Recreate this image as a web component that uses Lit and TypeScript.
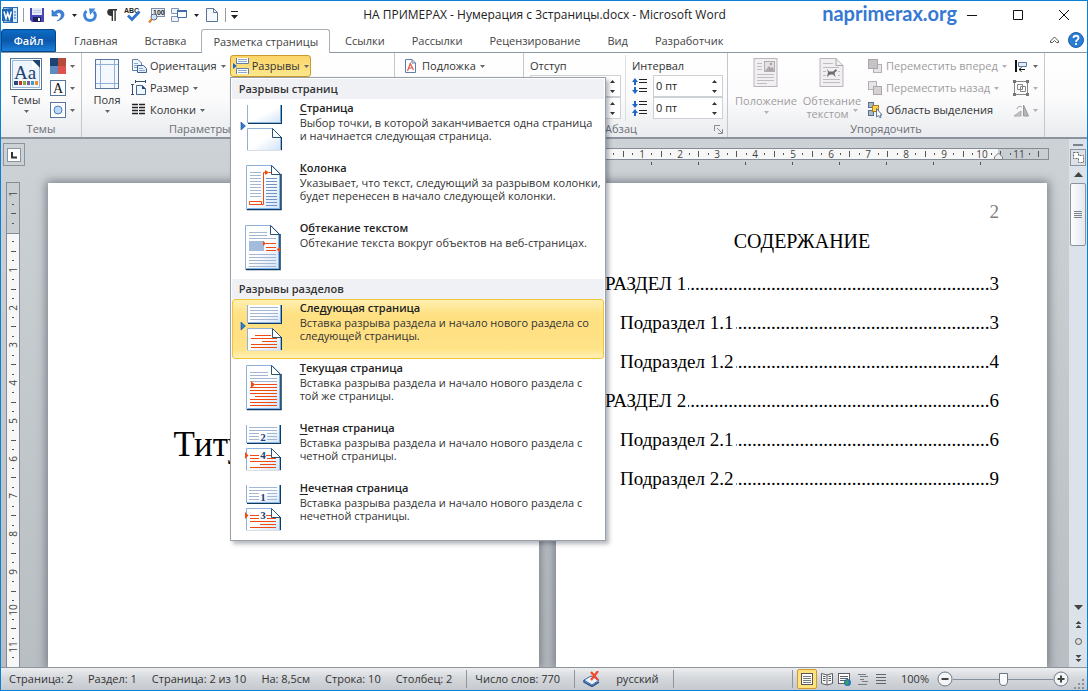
import { LitElement, html, css, svg } from "lit";
import { customElement } from "lit/decorators.js";
import { classMap } from "lit/directives/class-map.js";

const TABS = ["Главная", "Вставка", "Разметка страницы", "Ссылки", "Рассылки", "Рецензирование", "Вид", "Разработчик"];
const ACTIVE_TAB = "Разметка страницы";

const TOC = [
  { text: "РАЗДЕЛ 1", page: 3, sub: false },
  { text: "Подраздел 1.1", page: 3, sub: true },
  { text: "Подраздел 1.2", page: 4, sub: true },
  { text: "РАЗДЕЛ 2", page: 6, sub: false },
  { text: "Подраздел 2.1", page: 6, sub: true },
  { text: "Подраздел 2.2", page: 9, sub: true },
];

const CM = 37.75;

const lines = (ys: number[], x1: number, x2: number, color: string) =>
  ys.map((y) => svg`<path d="M${x1} ${y}.5H${x2}" stroke=${color} fill="none"/>`);

/* Sheets used by the break icons */
const topSheet = svg`
  <path d="M7 2V20H41V2" fill="url(#sheet)"/>
  <path d="M7.500 2V20" stroke="#8fb0d8"/><path d="M8 19.500H41" stroke="#8fb8e6"/><path d="M8 20.500H42" stroke="#123a5c"/>
  <path d="M40.500 2V19" stroke="#6aa8ea"/><path d="M41.500 2V21" stroke="#123a5c"/>`;
const bottomSheet = svg`
  <path d="M7.500 47V25.500H33L41.500 34V47" fill="url(#sheet)"/>
  <path d="M7.500 47V25.500H33" stroke="#8fb0d8" fill="none"/>
  <path d="M32.500 25.500V34.500H41.500Z" fill="#fff" stroke="#2a5578"/>
  <path d="M41.500 34V47" stroke="#123a5c"/><path d="M40.500 35V47" stroke="#8fb8e6"/><path d="M7 47.500H42" stroke="#dcdfe3"/>`;
const fullSheet = svg`
  <path d="M6.500 2.500H32L40.500 11V46.500H6.500Z" fill="url(#sheet)" stroke="#8fb0d8"/>
  <path d="M7 46.500H41V11" fill="none" stroke="#123a5c" stroke-width="1.500"/>
  <path d="M8 45.500H39.500V12" fill="none" stroke="#7fb4ee"/>
  <path d="M31.500 2.500V11.500H40.500Z" fill="#fff" stroke="#2a5578"/>`;
const blueArrow = svg`<path d="M1 19L5.500 23L1 27Z" fill="#2d7dd8" stroke="#174a8a" stroke-width=".6"/>`;

const bigIcon = (body: unknown) => html`<svg class="break-icon" width="44" height="50" viewBox="0 0 44 50" aria-hidden="true" fill="none">
  <defs><linearGradient id="sheet" x1="0" y1="0" x2="1" y2="1"><stop offset=".5" stop-color="#fff"/><stop offset="1" stop-color="#cfe2f8"/></linearGradient></defs>${body}</svg>`;

const GREY = "#a4b6d2";
const RED = "#f04a10";

const MENU = [
  {
    title: "Разрывы страниц",
    items: [
      { pre: "", key: "С", rest: "траница", text: "Выбор точки, в которой заканчивается одна страница и начинается следующая страница.", icon: svg`${topSheet}${bottomSheet}${blueArrow}` },
      {
        pre: "", key: "К", rest: "олонка", text: "Указывает, что текст, следующий за разрывом колонки, будет перенесен в начало следующей колонки.",
        icon: svg`${fullSheet}${lines([9, 12, 15, 18, 21, 24, 27, 30, 33], 10, 21, GREY)}${lines([15, 18, 21, 24, 27, 30, 33, 36, 39, 42], 26, 37, "#6f93c6")}
          <path d="M9.500 38.500H21.500V41.500H9.500ZM14 41.500H23.500V9.500H26" stroke=${RED}/><path d="M25 7L29 9.500L25 12Z" fill=${RED}/><path d="M29 9.500H31" stroke=${RED}/>`,
      },
      {
        pre: "О", key: "б", rest: "текание текстом", text: "Обтекание текста вокруг объектов на веб-страницах.",
        icon: svg`<g transform="translate(-1 0)">${fullSheet}${lines([9, 12], 10, 28, GREY)}${lines([15, 31, 34, 37, 40, 43], 10, 37, GREY)}<rect x="10" y="18" width="15" height="10" fill="#a3bbdd"/>
          ${lines([20, 24, 27], 27, 37, RED)}<path d="M24 18L27 20.500L24 23ZM41 24L37.500 26.500L41 29Z" fill=${RED}/></g>`,
      },
    ],
  },
  {
    title: "Разрывы разделов",
    items: [
      {
        pre: "Сле", key: "д", rest: "ующая страница", active: true, text: "Вставка разрыва раздела и начало нового раздела со следующей страницы.",
        icon: svg`${topSheet}${lines([4, 7, 10, 13, 16], 10, 38, GREY)}${bottomSheet}${lines([32], 15, 31, RED)}${lines([35, 44], 11, 37, RED)}${lines([38], 22, 37, RED)}${lines([41], 11, 37, RED)}${blueArrow}`,
      },
      {
        pre: "", key: "Т", rest: "екущая страница", text: "Вставка разрыва раздела и начало нового раздела с той же страницы.",
        icon: svg`${fullSheet}${lines([9, 12], 10, 28, GREY)}${lines([15, 18], 10, 37, GREY)}${lines([21], 15, 37, RED)}${lines([24, 27, 30], 10, 37, RED)}${lines([33], 15, 37, RED)}${lines([36, 39, 42], 10, 37, RED)}<path d="M11 18L15 21.500L11 25Z" fill=${RED}/>`,
      },
      { pre: "", key: "Ч", rest: "етная страница", text: "Вставка разрыва раздела и начало нового раздела с четной страницы.", icon: numbered("2", "4") },
      { pre: "", key: "Н", rest: "ечетная страница", text: "Вставка разрыва раздела и начало нового раздела с нечетной страницы.", icon: numbered("1", "3") },
    ],
  },
];

function numbered(a: string, b: string) {
  return svg`<g transform="translate(-1 0)">${topSheet}${lines([4, 7], 10, 38, GREY)}${lines([10, 13, 16], 10, 20, GREY)}${lines([10, 13, 16], 28, 38, GREY)}${bottomSheet}
    ${lines([32], 11, 20, RED)}${lines([32], 27, 32, RED)}${lines([35], 11, 20, RED)}${lines([35], 28, 37, RED)}${lines([38], 11, 37, RED)}${lines([41], 21, 37, RED)}${lines([44], 11, 37, RED)}
    <path d="M6 29L9.500 32.500L6 36Z" fill=${RED}/>
    <text x="24" y="18" class="icon-digit">${a}</text><text x="24" y="36" class="icon-digit">${b}</text></g>`;
}

const ico = (body: unknown, w = 16, h = 16) =>
  html`<svg width=${w} height=${h} viewBox="0 0 ${w} ${h}" fill="none" aria-hidden="true">${body}</svg>`;
const caret = html`<svg class="caret" width="5" height="3" viewBox="0 0 5 3" aria-hidden="true"><path d="M0 0H5L2.500 3Z" fill="currentColor"/></svg>`;

const I = {
  word: ico(svg`<rect x="1.500" y=".5" width="14" height="15" fill="#dcebf8" stroke="#2a6fb5"/><path d="M0 2L11 1V15L0 14Z" fill="#1c66b4"/><path d="M2 4.500L4 11.500L5.700 6L7.400 11.500L9.300 4.500" stroke="#fff" stroke-width="1.500"/><path d="M12 5H14M12 8H14M12 11H14" stroke="#2a6fb5"/>`),
  save: ico(svg`<path d="M1 1H15V15H3L1 13Z" fill="#4747b8"/><path d="M3 1H13V8H3Z" fill="#e8ecf8"/><path d="M4 10H12V15H4Z" fill="#20205c"/><rect x="9" y="11" width="2" height="3" fill="#fff"/><path d="M4 3.500H12M4 5.500H12" stroke="#bcc6e4"/>`),
  undo: ico(svg`<path d="M2 3V9H8L6 7C9 4.500 12 6 11 9.500C10.500 11.500 9 12.500 7 14C11 13 14 11 14 7.500C14 3 8 1.500 4.500 5Z" fill="#3d84da" stroke="#2a66b8" stroke-width=".6"/>`),
  redo: ico(svg`<path d="M4.500 4C1 7 2.500 13.500 8 13.500C13.500 13.500 15 7.500 11.500 4.500" stroke="#3d84da" stroke-width="2.800"/><path d="M7 1.500L13.500 1.500L8 8Z" fill="#3d84da"/>`),
  pilcrow: ico(svg`<path d="M7 2H14V3.500H12.800V14H11.400V3.500H10V14H8.600V9C3 9 3 2 7 2Z" fill="#333"/>`),
  spell: html`<svg width="18" height="18" viewBox="0 0 18 18" fill="none" aria-hidden="true"><text x="0" y="7" class="tiny">ABC</text><path d="M4 9.500L8 13.500L15.500 5.500" stroke="#2f74d0" stroke-width="2.800"/></svg>`,
  find: html`<svg width="18" height="18" viewBox="0 0 18 18" fill="none" aria-hidden="true"><rect x="4.500" y="2.500" width="13" height="8" fill="#e8f1fb" stroke="#7a8ca4"/><text x="6" y="9" class="tiny">100</text><circle cx="7" cy="11" r="3" fill="#cfe4fa" stroke="#5a6a80"/><path d="M5 13L2 16.500" stroke="#d8842a" stroke-width="2.200"/></svg>`,
  windows: html`<svg width="18" height="16" viewBox="0 0 18 16" fill="none" aria-hidden="true"><path d="M1.500 1.500H8.500V6.500H1.500ZM1.500 9.500H8.500V14.500H1.500Z" fill="#eef3fa" stroke="#7f95b5"/><path d="M7.500 3.500H16.500V10.500H7.500Z" fill="#fff" stroke="#3f6eaa"/><path d="M7 4H17" stroke="#3f6eaa" stroke-width="2"/></svg>`,
  doc: ico(svg`<path d="M2.500 1.500H9.500L13.500 5.500V14.500H2.500Z" fill="#f5f9fe" stroke="#5a7596"/><path d="M9.500 1.500V5.500H13.500" stroke="#5a7596"/>`),
  themes: ico(svg`<rect x=".5" y=".5" width="31" height="31" fill="#fff" stroke="#56779b"/><path d="M2.500 29.500V2.500H23L29.500 9V29.500Z" fill="#eef5fc" stroke="#9cb7d6"/><path d="M22 2L30 10V2Z" fill="#1d4370"/><path d="M22 2V9.500H29.500Z" fill="#fff"/><text x="4" y="21" class="aa">Aa</text>
    <rect x="4" y="23" width="4" height="4" fill="#27497a"/><rect x="9" y="23" width="3" height="4" fill="#c0392f"/><rect x="13" y="23" width="3" height="4" fill="#84a83c"/><rect x="17" y="23" width="3" height="4" fill="#7a55a2"/><rect x="21" y="23" width="3" height="4" fill="#3a9fc0"/><rect x="25" y="23" width="3" height="4" fill="#ee8a2c"/>`, 32, 32),
  colors: ico(svg`<path d="M0 0H8V8H0Z" fill="#1d4370"/><path d="M8 0H16V8H8Z" fill="#b84a3c"/><path d="M0 8H8V16H0Z" fill="#5d8cc4"/><path d="M8 8H16V16H8Z" fill="#e0504c"/>`),
  fonts: ico(svg`<rect x=".5" y=".5" width="15" height="15" fill="#fff" stroke="#56779b"/><text x="3" y="13" class="letter">A</text>`),
  effects: ico(svg`<rect x=".5" y=".5" width="15" height="15" fill="#fff" stroke="#56779b"/><circle cx="8" cy="8" r="4" fill="#bcd9f7" stroke="#4a7fc0"/>`),
  margins: ico(svg`<rect x="1.500" y=".5" width="23" height="29" fill="#f3f8fe" stroke="#56779b"/><path d="M6.500 1V29M20.500 1V29M2 5.500H24M2 24.500H24" stroke="#8eb0da"/>`, 26, 30),
  orient: ico(svg`<path d="M1.500 1.500H7L10.500 5V12.500H1.500Z" fill="#f0f6fd" stroke="#5f7fa6"/><path d="M3 5.500H7M3 7.500H7M3 9.500H6" stroke="#8ca8cc"/><path d="M6.500 7.500H12.500L15.500 10.500V14.500H6.500Z" fill="#e2eefb" stroke="#44648c"/><path d="M8 10.500H12M8 12.500H14" stroke="#8ca8cc"/>`),
  size: ico(svg`<path d="M4 1.500H15M4.500 0V3M14.500 0V3M1.500 4V15M0 4.500H3M0 14.500H3" stroke="#33506f"/><path d="M5.500 5.500H11L14.500 9V14.500H5.500Z" fill="#f0f6fd" stroke="#44648c"/><path d="M11 5V9H15Z" fill="#1d4370"/>`),
  columns: ico(svg`<path d="M1 2.500H7M1 5.500H7M1 8.500H7M1 11.500H7M8 2.500H14M8 5.500H14M8 8.500H14M8 11.500H14" stroke="#222" stroke-width="1.500"/>`),
  breaks: ico(svg`<path d="M3.500 0V5.500H15.500V0M3.500 16V10.500H15.500V16" fill="#fff" stroke="#5f7fa6"/><path d="M5 1.500H14M5 3.500H14M5 12.500H14M5 14.500H14" stroke="#8ca8cc"/><path d="M0 5L4 8L0 11Z" fill="#1f66c8"/>`),
  mark: ico(svg`<path d="M2.500 1.500H9L12.500 5V14.500H2.500Z" fill="#fff" stroke="#5f7fa6"/><path d="M9 1.500V5H12.500" stroke="#5f7fa6"/><path d="M4.500 13L7.300 5.500L10.500 12M5.500 10.500L9.500 9.500" stroke="#e2574a" stroke-width="1.200"/>`),
  before: ico(svg`<path d="M0 4L3 0L6 4H4V7H2V4Z" fill="#1f66c8"/><path d="M0 12L3 16L6 12H4V9H2V12Z" fill="#1f66c8"/><path d="M7 1.500H15M7 4.500H15M7 10.500H15M7 13.500H15" stroke="#222"/>`),
  after: ico(svg`<path d="M0 4L3 8L6 4H4V1H2V4Z" fill="#1f66c8"/><path d="M0 13L3 9L6 13H4V16H2V13Z" fill="#1f66c8"/><path d="M7 1.500H15M7 4.500H15M7 10.500H15M7 13.500H15" stroke="#222"/>`),
  position: ico(svg`<rect x="1" y=".5" width="23" height="28" fill="#f1eff1" stroke="#b9b5b9"/><path d="M4 5.500H9M4 8.500H9M4 11.500H9M4 16.500H21M4 19.500H21M4 22.500H21M4 25.500H14" stroke="#c0bcc0"/><rect x="11.500" y="3.500" width="10" height="10" fill="#e3e1e3" stroke="#b0acb0"/><path d="M12 13L16 8L18 10L20 9L21 13Z" fill="#a9a5a9"/><circle cx="18" cy="6" r="1.300" fill="#a9a5a9"/>`, 26, 30),
  wrap: ico(svg`<path d="M1 .5H17L24 7.500V28.500H1Z" fill="#f1eff1" stroke="#b9b5b9"/><path d="M17 .5V7.500H24" stroke="#aaa6aa"/><path d="M4 5.500H14M4 9.500H20M4 13.500H7M19 13.500H21M4 17.500H7M19 17.500H21M4 21.500H21M4 24.500H21" stroke="#c0bcc0"/><path d="M8 11L10 13.500H14L17 11L18 12.500L15.500 15L16.500 19L14 16.500H11L8 19L9 14.500Z" fill="#6f6b6f"/>`, 26, 30),
  forward: ico(svg`<rect x="6.500" y="6.500" width="8" height="8" fill="#e6e4e6" stroke="#b4b0b4"/><rect x="1.500" y="1.500" width="9" height="9" fill="#c6c2c6" stroke="#aaa6aa"/>`),
  backward: ico(svg`<rect x="1.500" y="1.500" width="8" height="8" fill="#e6e4e6" stroke="#b4b0b4"/><rect x="6.500" y="6.500" width="8" height="8" fill="#d4d0d4" stroke="#aaa6aa"/>`),
  select: ico(svg`<rect x="1.500" y=".5" width="5" height="5" fill="#a9b9cc" stroke="#5c6f86"/><rect x="1.500" y="8.500" width="5" height="5" fill="#a9b9cc" stroke="#5c6f86"/><rect x="5.500" y="3.500" width="6" height="6" fill="#ffd24a" stroke="#a87f2a"/><path d="M9.500 6.500V15L11.500 13.500L13 16L14 15.500L13 13H15Z" fill="#fff" stroke="#38597f" stroke-width=".8"/>`),
  align: ico(svg`<path d="M3 2V14" stroke="#111" stroke-width="2"/><path d="M5.500 4.500H13.500V8.500H5.500Z" fill="#e3eefa" stroke="#5c7ba2"/><path d="M6 11.500H12M6 11.500L8.500 9.500M6 11.500L8.500 13.500" stroke="#111"/>`),
  group: ico(svg`<path d="M1.500 1.500H14.500V14.500H1.500ZM4.500 4.500H9.500V9.500H4.500ZM7.500 6.500H12.500V11.500H7.500Z" stroke="#8a868a"/><path d="M0 0H3V3H0ZM13 0H16V3H13ZM0 13H3V16H0ZM13 13H16V16H13Z" fill="#777"/>`),
  rotate: ico(svg`<path d="M1 14H8L8 9Z" fill="#c9c5c9" stroke="#aaa6aa"/><path d="M10.500 14V3L15.500 14Z" fill="#b8b4b8" stroke="#9a969a"/><path d="M4 7C5 4 7 4 9 5" stroke="#9a969a"/>`),
  print: ico(svg`<rect x="2.500" y="2.500" width="11" height="11" fill="#fff" stroke="#555"/><path d="M4 5.500H12M4 7.500H12M4 9.500H12M4 11.500H12" stroke="#777"/>`),
  read: ico(svg`<path d="M8 4L2.500 2.500V12.500L8 14L13.500 12.500V2.500Z" fill="#f5f5f5" stroke="#5b5f66"/><path d="M8 4V14M4 5.500H6.500M4 7.500H6.500M4 9.500H6.500M9.500 5.500H12M9.500 7.500H12M9.500 9.500H12" stroke="#5b5f66"/>`),
  web: ico(svg`<rect x="1.500" y="2.500" width="11" height="10" fill="#fff" stroke="#5b5f66"/><path d="M3 5.500H11M3 7.500H11M3 9.500H8" stroke="#5b5f66"/><circle cx="10.500" cy="11.500" r="3.500" fill="#2577b5"/><path d="M8 11L10.500 9L12 12L10 14Z" fill="#3da650"/>`),
  outline: ico(svg`<path d="M3 3.500H11M5 5.500H13M5 8.500H9M7 10.500H13M3 13.500H12" stroke="#777b82"/>`),
  draft: ico(svg`<path d="M3 3.500H13M3 6.500H13M3 9.500H13M3 12.500H13" stroke="#60646b"/>`),
  proof: html`<svg width="18" height="16" viewBox="0 0 18 16" fill="none" aria-hidden="true"><path d="M1 9L8 5L16 9L9 14Z" fill="#eaf2fc" stroke="#3c6aa6"/><path d="M1 9V11L9 15.500L16 11" stroke="#2c5694" stroke-width="1.500"/><path d="M8 1L15 9M15 0L8 9" stroke="#ee4b2c" stroke-width="2.200"/></svg>`,
};

@customElement("app-root")
export class AppRoot extends LitElement {
  static styles = css`
    :host { display: block; height: 100vh; font-family: "Open Sans", "Noto Sans", sans-serif; font-size: 11px; line-height: 16px; color: #333; }
    * { box-sizing: border-box; }
    button { font: inherit; color: inherit; background: none; border: 0; padding: 0; margin: 0; display: flex; align-items: center; }
    svg { display: block; flex: none; }
    .window { height: 100%; display: flex; flex-direction: column; border: 1px solid #0a7fd6; background: #fff; overflow: hidden; }
    .spacer { flex: 1; }

    .titlebar { display: flex; align-items: center; height: 28px; flex: none; }
    .qat { display: flex; align-items: center; flex: 1; gap: 5px; padding-left: 1px; color: #222; }
    .qat .with-caret { gap: 5px; }
    .qat .caret { color: #222; }
    .divider { width: 1px; height: 14px; background: #9a9a9a; }
    .title { color: #222; white-space: nowrap; font-size: 12px; }
    .title-right { flex: 1; display: flex; align-items: center; justify-content: flex-end; }
    .brand { font: 700 20px/24px Lato, sans-serif; color: #3478d4; margin-right: -8px; padding-bottom: 4px; }
    .win-btn { width: 46px; height: 26px; justify-content: center; }

    .tabs { display: flex; align-items: flex-end; height: 24px; flex: none; border-bottom: 1px solid #8d97a3; }
    .file { width: 55px; height: 23px; justify-content: center; color: #fff; font-weight: 600; background: linear-gradient(#0d6cc4, #0a57ab 50%, #1c80d8); border: 1px solid #07468c; border-radius: 3px 3px 0 0; margin-right: 4px; }
    .tab { height: 23px; padding: 0 11px; margin: 0 1px 0 2px; border: 1px solid transparent; border-bottom: 0; color: #444; }
    .tab.on { height: 24px; margin-bottom: -1px; background: #fff; border-color: #a9b0b8; border-radius: 3px 3px 0 0; }
    .tab-tools { display: flex; align-items: center; gap: 9px; padding-right: 3px; height: 24px; }

    .ribbon { display: flex; height: 86px; flex: none; background: linear-gradient(#fff, #fbfbfc 55%, #e9ebee); border-bottom: 2px solid #8b939c; position: relative; z-index: 2; }
    .group { display: flex; flex-direction: column; border-right: 1px solid #c3c8ce; }
    .group-body { display: flex; height: 68px; padding-top: 2px; }
    .group-name { display: flex; align-items: center; height: 16px; color: #6a6e75; padding: 0 4px; }
    .group-name span { flex: 1; text-align: center; }
    .g-themes { width: 81px; } .g-themes .group-body { padding-left: 5px; gap: 4px; }
    .g-setup { width: 313px; } .g-setup .group-body { padding-left: 5px; gap: 4px; } .g-setup .group-name { padding: 0 12px 0 0; }
    .g-bg { width: 129px; } .g-bg .group-body { padding-left: 8px; }
    .g-par { width: 204px; }
    .g-arr { width: 317px; } .g-arr .group-body { padding: 2px 6px 0 5px; }
    .big { flex-direction: column; width: 40px; padding-top: 3px; line-height: 13px; }
    .big svg:first-child { margin-bottom: 3px; }
    .big .caret { margin-top: 4px; }
    .big .inline { display: flex; align-items: center; gap: 3px; }
    .big .inline .caret { margin-top: 0; }
    .big.medium svg:first-child { margin-top: 1px; margin-bottom: 4px; }
    .big.wide { width: 66px; }
    .big.wide svg:first-child { margin-bottom: 6px; }
    .stack { display: flex; flex-direction: column; }
    .g-arr .stack { margin-left: 2px; }
    .small { height: 22px; gap: 3px; white-space: nowrap; }
    .caret { color: #666; margin-left: 1px; }
    .off { color: #a09ca0; } .off .caret { color: #b4b0b4; }
    .anchor { position: relative; z-index: 5; }
    .breaks { width: 81px; height: 22px; gap: 3px; padding-left: 2px; border: 1px solid #c99a2c; border-radius: 3px; background: linear-gradient(#fbd46a, #fde88c); }

    .col { display: flex; flex-direction: column; padding: 0 4px 0 6px; flex: 1; }
    .col + .col { border-left: 1px solid #dcdfe3; }
    .col-title { height: 20px; line-height: 22px; }
    .field { display: flex; align-items: center; height: 22px; gap: 5px; }
    .spin { display: flex; flex: 1; height: 22px; min-width: 0; background: #fff; border: 1px solid #cdd1d6; }
    .spin input { width: 100%; min-width: 0; font: inherit; color: #222; border: 0; padding: 0 2px; background: none; outline: 0; }
    .spin div { display: flex; flex-direction: column; justify-content: space-around; width: 16px; flex: none; align-items: center; }

    .menu { position: absolute; left: 0; top: 22px; width: 376px; background: #fff; border: 1px solid #9aa0a8; box-shadow: 3px 3px 4px rgba(40, 50, 70, .35); padding: 1px; }
    .menu-title { height: 20px; padding: 0 7px; background: #f0f1f5; font-weight: 600; line-height: 20px; }
    .entry { width: 100%; height: 60px; padding: 0 1px 0 7px; gap: 16px; align-items: flex-start; text-align: left; border: 1px solid transparent; border-radius: 3px; }
    .entry.on { border-color: #f0c53c; background: linear-gradient(#ffefb0, #ffe183 25%, #ffe083 60%, #ffe488 85%, #fff0b8); }
    .entry b { display: block; line-height: 15px; font-weight: 600; color: #222; }
    .entry b u { text-underline-offset: 2px; }
    .entry .desc { display: block; line-height: 13px; padding-top: 1px; }
    .break-icon { margin-top: 3px; }
    .icon-digit { font: 700 11px "Liberation Serif", serif; fill: #1d3f77; text-anchor: middle; }
    .tiny { font: 700 7px "Liberation Sans", sans-serif; fill: #222; }
    .aa { font: 19px "Liberation Serif", serif; fill: #1d4370; }
    .letter { font: 14px "Liberation Serif", serif; fill: #111; }

    .work { flex: 1; min-height: 0; display: flex; background: linear-gradient(#cdd2d6, #b9bec3); }
    .desk { flex: 1; min-width: 0; display: flex; flex-direction: column; }
    .ruler-row { display: flex; justify-content: space-between; height: 29px; flex: none; padding: 4px 20px 0 2px; }
    .hruler { padding-top: 5px; }
    .tabstop { width: 22px; height: 23px; border: 1px solid #8c939b; justify-content: center; }
    .desk-body { flex: 1; min-height: 0; display: flex; }
    .vruler { width: 25px; padding: 14px 0 0 5px; flex: none; overflow: hidden; }
    .ruler-text { font-size: 10px; fill: #444; text-anchor: middle; }
    .pages { flex: 1; display: grid; grid-template-columns: repeat(2, minmax(0, 1fr)); gap: 17px; padding: 15px 22px 0 22px; overflow: hidden; }
    .page { background: #fff; box-shadow: 0 0 9px 2px rgba(70, 78, 88, .6); font-family: "Liberation Serif", serif; color: #000; }
    .heading { padding-top: 243px; text-align: center; font-size: 35px; line-height: 38px; }
    .toc-page { padding: 18px 48px 0 49px; font-size: 19px; line-height: 22px; }
    .page-no { text-align: right; color: #808080; }
    .toc-title { text-align: center; margin: 7px 0 12px; font-size: 20px; }
    .toc-row { display: flex; align-items: center; height: 39px; white-space: nowrap; }
    .toc-row.sub { padding-left: 15px; }
    .dots { flex: 1; min-width: 0; overflow: hidden; direction: rtl; margin-left: 2px; }

    .scroll { width: 18px; flex: none; display: flex; flex-direction: column; align-items: center; background: #dce2e9; padding-top: 5px; }
    .split { width: 10px; height: 2px; background: #7c838b; margin-bottom: 3px; }
    .ruler-toggle { width: 16px; height: 17px; border: 1px solid #8c939b; justify-content: center; }
    .arrow { width: 16px; height: 17px; justify-content: center; }
    .thumb { width: 16px; height: 63px; border: 1px solid #8a929c; border-radius: 2px; background: linear-gradient(90deg, #fdfdfe, #e3e7ee); justify-content: center; }

    .status { display: flex; align-items: center; height: 23px; flex: none; border-top: 1px solid #8d949c; background: linear-gradient(#eceef0, #d3d6da 50%, #c6cacf); padding-left: 8px; }
    .status .texts { display: flex; gap: 15px; white-space: nowrap; }
    .status .sep { width: 1px; height: 18px; background: #8f959d; margin: 0 8px 0 14px; }
    .views { display: flex; align-items: center; gap: 2px; margin: 0 12px 0 -4px; }
    .view.on { width: 20px; height: 20px; justify-content: center; border: 1px solid #cf9a2e; border-radius: 2px; background: #ffe27c; }
    .zoom { display: flex; align-items: center; margin-left: 8px; }
    .zoom input { appearance: none; width: 100px; height: 16px; margin: 0; background: linear-gradient(#8490a0, #8490a0) center / 100% 1px no-repeat; }
    .zoom input::-webkit-slider-thumb { appearance: none; width: 9px; height: 13px; background: #fafbfc; border: 1px solid #6e7884; border-radius: 1px 1px 5px 5px; }
    .grip { align-self: flex-end; margin-left: 5px; }
  `;

  private hRuler() {
    const zero = 49;
    const out = [];
    for (let q = -4; q < 47; q++) {
      const x = Math.round(zero + (q * CM) / 4);
      if (q === 0) continue;
      if (q % 4 === 0) out.push(svg`<text class="ruler-text" x=${x} y="9.500">${Math.abs(q / 4)}</text>`);
      else out.push(svg`<path d="M${x}.5 ${q % 2 ? 5 : 3}V${q % 2 ? 7 : 9}" stroke="#555"/>`);
    }
    const ticks = [0, 1, 2, 3, 4, 5, 6, 7, 8].map((i) => svg`<path d="M${49 + i * 47}.5 14V17" stroke="#555"/>`);
    return html`<svg width="494" height="18" viewBox="0 0 494 18" fill="none" aria-hidden="true">
      <rect x=".5" y=".5" width="493" height="11" fill="#c9ced3" stroke="#858c94"/>
      <rect x="49" y="1" width="394" height="10" fill="#f7f7f7"/>${out}${ticks}
      <path d="M439.500 11.500V9L443.500 5L447.500 9V11.500Z" fill="#eee" stroke="#7a8088"/>
    </svg>`;
  }

  private vRuler() {
    const zero = 50;
    const out = [];
    for (let q = -4; q < 46; q++) {
      const y = Math.round(zero + (q * CM) / 4);
      if (q === 0) continue;
      if (q % 4 === 0) out.push(svg`<text class="ruler-text" transform="translate(11 ${y}) rotate(-90)">${Math.abs(q / 4)}</text>`);
      else out.push(svg`<path d="M${q % 2 ? 6 : 5} ${y}.5H${q % 2 ? 8 : 10}" stroke="#555"/>`);
    }
    return html`<svg width="14" height="700" viewBox="0 0 14 700" fill="none" aria-hidden="true">
      <rect x=".5" y=".5" width="13" height="699" fill="#f7f7f7" stroke="#858c94"/>
      <rect x=".5" y=".5" width="13" height="51" fill="#c9ced3" stroke="#858c94"/>${out}</svg>`;
  }

  private spin(label: string, icon: unknown) {
    return html`<div class="field">${icon}<span class="spin"><input type="text" .value=${"0 пт"} aria-label=${label} />
      <div><button aria-label="Больше">${ico(svg`<path d="M0 3L2.500 0L5 3Z" fill="#333"/>`, 5, 3)}</button>
      <button aria-label="Меньше">${ico(svg`<path d="M0 0L2.500 3L5 0Z" fill="#333"/>`, 5, 3)}</button></div></span></div>`;
  }

  private menu() {
    return html`<div class="menu" role="menu">
      ${MENU.map((s) => html`<div class="menu-title">${s.title}</div>
        ${s.items.map((i: any) => html`<button class=${classMap({ entry: true, on: !!i.active })} role="menuitem">
          ${bigIcon(i.icon)}<span><b>${i.pre}<u>${i.key}</u>${i.rest}</b><span class="desc">${i.text}</span></span></button>`)}`)}
    </div>`;
  }

  private launcher = ico(svg`<path d="M.5 6V.5H6M3 3L8 8M8.500 4V8.500H4" stroke="#888c92"/>`, 9, 9);

  private arrowIcon(d: string, h = 5) {
    return ico(svg`<path d=${d} fill="#444"/>`, 9, h);
  }

  render() {
    return html`<div class="window">
      <header class="titlebar">
        <div class="qat">
          ${I.word}<i class="divider"></i>
          <button aria-label="Сохранить">${I.save}</button>
          <button class="with-caret" aria-label="Отменить">${I.undo}${caret}</button>
          <button aria-label="Повторить">${I.redo}</button>
          <button aria-label="Знаки абзаца">${I.pilcrow}</button>
          <button aria-label="Правописание">${I.spell}</button>
          <button aria-label="Масштаб">${I.find}</button>
          <button class="with-caret" aria-label="Окна">${I.windows}${caret}</button>
          <button aria-label="Создать">${I.doc}</button>
          <i class="divider"></i>
          <button aria-label="Настройка панели">${ico(svg`<path d="M0 .5H7" stroke="#222"/><path d="M0 4H7L3.500 8Z" fill="#222"/>`, 7, 8)}</button>
        </div>
        <div class="title">НА ПРИМЕРАХ - Нумерация с 3страницы.docx - Microsoft Word</div>
        <div class="title-right">
          <span class="brand">naprimerax.org</span>
          <button class="win-btn" aria-label="Свернуть">${ico(svg`<path d="M0 5.500H10" stroke="#111"/>`, 10, 10)}</button>
          <button class="win-btn" aria-label="Развернуть">${ico(svg`<path d="M.5 .5H9.500V9.500H.5Z" stroke="#111"/>`, 10, 10)}</button>
          <button class="win-btn" aria-label="Закрыть">${ico(svg`<path d="M0 0L10 10M10 0L0 10" stroke="#111"/>`, 10, 10)}</button>
        </div>
      </header>

      <nav class="tabs">
        <button class="file">Файл</button>
        ${TABS.map((t) => html`<button class=${classMap({ tab: true, on: t === ACTIVE_TAB })}>${t}</button>`)}
        <span class="spacer"></span>
        <div class="tab-tools">
          <button aria-label="Свернуть ленту">${ico(svg`<path d="M.5 5L4.500 1L8.500 5V6.500H6.500L4.500 4.500L2.500 6.500H.5Z" fill="#fff" stroke="#555"/>`, 9, 8)}</button>
          <button aria-label="Справка">${ico(svg`<circle cx="8" cy="8" r="7.500" fill="#2b7cd3" stroke="#1d5fa8"/><path d="M5.500 6C5.500 3 10.500 3 10.500 6C10.500 8 8 7.800 8 10M8 11V13" stroke="#fff" stroke-width="1.800"/>`)}</button>
        </div>
      </nav>

      <section class="ribbon">
        <div class="group g-themes">
          <div class="group-body">
            <button class="big">${I.themes}Темы${caret}</button>
            <div class="stack">
              <button class="small" aria-label="Цвета">${I.colors}${caret}</button>
              <button class="small" aria-label="Шрифты">${I.fonts}${caret}</button>
              <button class="small" aria-label="Эффекты">${I.effects}${caret}</button>
            </div>
          </div>
          <div class="group-name"><span>Темы</span></div>
        </div>
        <div class="group g-setup">
          <div class="group-body">
            <button class="big medium">${I.margins}Поля${caret}</button>
            <div class="stack">
              <button class="small">${I.orient}Ориентация${caret}</button>
              <button class="small">${I.size}Размер${caret}</button>
              <button class="small">${I.columns}Колонки${caret}</button>
            </div>
            <div class="anchor">
              <button class="breaks" aria-haspopup="menu" aria-expanded="true">${I.breaks}Разрывы${caret}</button>
              ${this.menu()}
            </div>
          </div>
          <div class="group-name"><span>Параметры страницы</span>${this.launcher}</div>
        </div>
        <div class="group g-bg">
          <div class="group-body"><button class="small">${I.mark}Подложка${caret}</button></div>
          <div class="group-name"><span>Фон страницы</span></div>
        </div>
        <div class="group g-par">
          <div class="group-body">
            <div class="col"><div class="col-title">Отступ</div>${this.spin("Отступ слева", "")}${this.spin("Отступ справа", "")}</div>
            <div class="col"><div class="col-title">Интервал</div>${this.spin("Интервал до", I.before)}${this.spin("Интервал после", I.after)}</div>
          </div>
          <div class="group-name"><span>Абзац</span>${this.launcher}</div>
        </div>
        <div class="group g-arr">
          <div class="group-body">
            <button class="big wide off">${I.position}Положение${caret}</button>
            <button class="big wide off">${I.wrap}Обтекание<span class="inline">текстом${caret}</span></button>
            <div class="stack">
              <button class="small off">${I.forward}Переместить вперед${caret}</button>
              <button class="small off">${I.backward}Переместить назад${caret}</button>
              <button class="small">${I.select}Область выделения</button>
            </div>
            <span class="spacer"></span>
            <div class="stack">
              <button class="small" aria-label="Выровнять">${I.align}${caret}</button>
              <button class="small off" aria-label="Группировать">${I.group}${caret}</button>
              <button class="small off" aria-label="Повернуть">${I.rotate}${caret}</button>
            </div>
          </div>
          <div class="group-name"><span>Упорядочить</span></div>
        </div>
      </section>

      <main class="work">
        <div class="desk">
          <div class="ruler-row">
            <button class="tabstop" aria-label="Табуляция">${ico(svg`<rect x=".5" y=".5" width="13" height="13" fill="#fff" stroke="#8c939b"/><path d="M5 4V9.500H10" stroke="#333" stroke-width="2"/>`, 14, 14)}</button>
            <div class="hruler">${this.hRuler()}</div>
          </div>
          <div class="desk-body">
            <div class="vruler">${this.vRuler()}</div>
            <div class="pages">
              <article class="page"><div class="heading">Титульный лист</div></article>
              <article class="page toc-page">
                <div class="page-no">2</div>
                <div class="toc-title">СОДЕРЖАНИЕ</div>
                ${TOC.map((r) => html`<div class=${classMap({ "toc-row": true, sub: r.sub })}><span>${r.text}</span><span class="dots" aria-hidden="true">${".".repeat(90)}</span><span>${r.page}</span></div>`)}
              </article>
            </div>
          </div>
        </div>
        <aside class="scroll">
          <div class="split"></div>
          <button class="ruler-toggle" aria-label="Линейка">${ico(svg`<path d="M1.500 1.500H6.500V4.500H11.500V11.500H6.500V7.500H1.500Z" fill="#fff" stroke="#666" stroke-dasharray="2 1"/>`, 13, 13)}</button>
          <button class="arrow" aria-label="Вверх">${this.arrowIcon("M0 5L4.500 0L9 5Z")}</button>
          <button class="thumb" aria-label="Прокрутка">${ico(svg`<path d="M0 .5H8M0 2.500H8M0 4.500H8M0 6.500H8" stroke="#7c838b"/>`, 8, 7)}</button>
          <span class="spacer"></span>
          <button class="arrow" aria-label="Вниз">${this.arrowIcon("M0 0H9L4.500 5Z")}</button>
          <button class="arrow" aria-label="Предыдущая">${this.arrowIcon("M1.500 3L4.500 0L7.500 3ZM1.500 7L4.500 4L7.500 7Z", 7)}</button>
          <button class="arrow" aria-label="Объект перехода">${ico(svg`<circle cx="4.500" cy="4.500" r="3" fill="#ddd" stroke="#555"/>`, 9, 9)}</button>
          <button class="arrow" aria-label="Следующая">${this.arrowIcon("M1.500 0H7.500L4.500 3ZM1.500 4H7.500L4.500 7Z", 7)}</button>
        </aside>
      </main>

      <footer class="status">
        <div class="texts"><span>Страница: 2</span><span>Раздел: 1</span><span>Страница: 2 из 10</span><span>На: 8,5см</span><span>Строка: 10</span><span>Столбец: 2</span></div>
        <i class="sep"></i><span>Число слов: 770</span><i class="sep"></i>
        <div class="texts">${I.proof}<span>русский</span></div><i class="sep"></i>
        <span class="spacer"></span>
        <i class="sep"></i>
        <div class="views">
          <button class="view on" aria-label="Разметка">${I.print}</button><button class="view" aria-label="Чтение">${I.read}</button><button class="view" aria-label="Веб">${I.web}</button><button class="view" aria-label="Структура">${I.outline}</button><button class="view" aria-label="Черновик">${I.draft}</button>
        </div>
        <span>100%</span>
        <div class="zoom">
          <button aria-label="Мельче">${ico(svg`<circle cx="8" cy="8" r="7" fill="#f4f5f7" stroke="#6e7884"/><path d="M4.500 8H11.500" stroke="#444" stroke-width="2"/>`)}</button>
          <input type="range" min="0" max="100" value="50" aria-label="Масштаб" />
          <button aria-label="Крупнее">${ico(svg`<circle cx="8" cy="8" r="7" fill="#f4f5f7" stroke="#6e7884"/><path d="M4.500 8H11.500M8 4.500V11.500" stroke="#444" stroke-width="2"/>`)}</button>
        </div>
        <div class="grip">${ico(svg`<path d="M8 1H10V3H8ZM4 5H6V7H4ZM8 5H10V7H8ZM0 9H2V11H0ZM4 9H6V11H4ZM8 9H10V11H8Z" fill="#8a929c"/>`, 13, 12)}</div>
      </footer>
    </div>`;
  }
}
